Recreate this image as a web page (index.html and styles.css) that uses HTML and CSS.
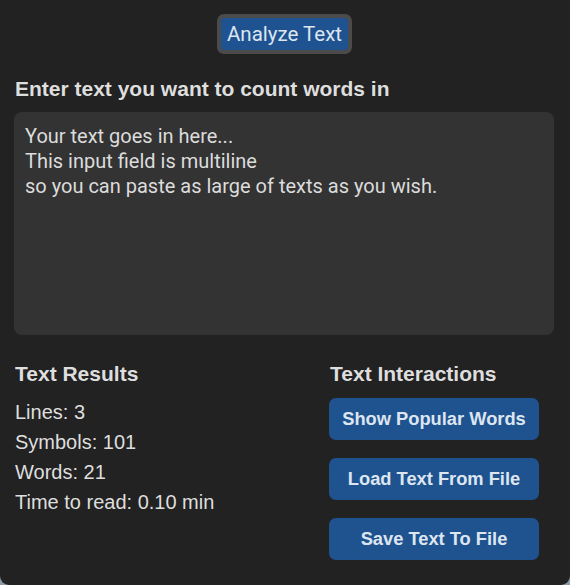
FILE: index.html
```html
<!DOCTYPE html>
<html>
<head>
<meta charset="utf-8">
<link rel="stylesheet" href="styles.css">
</head>
<body>
<div class="app">
  <div class="top">
    <button class="analyze">Analyze Text</button>
  </div>
  <label class="prompt" for="input">Enter text you want to count words in</label>
  <textarea id="input" class="input">Your text goes in here...
This input field is multiline
so you can paste as large of texts as you wish.</textarea>
  <div class="bottom">
    <section class="results">
      <h2 class="heading">Text Results</h2>
      <div class="stat">Lines: 3</div>
      <div class="stat">Symbols: 101</div>
      <div class="stat">Words: 21</div>
      <div class="stat">Time to read: 0.10 min</div>
    </section>
    <section class="actions">
      <h2 class="heading">Text Interactions</h2>
      <button class="action">Show Popular Words</button>
      <button class="action">Load Text From File</button>
      <button class="action">Save Text To File</button>
    </section>
  </div>
</div>
</body>
</html>
```

FILE: styles.css
```css
html, body {
  margin: 0;
  padding: 0;
  background: #8d9aa6;
}
.app {
  width: 570px;
  height: 585px;
  box-sizing: border-box;
  background: #222222;
  border-radius: 0 0 9px 9px;
  padding: 14px 16px 0 14px;
  font-family: "Liberation Sans", Arial, sans-serif;
  color: #dedede;
}
.top {
  display: flex;
  justify-content: center;
  padding-left: 1px;
}
.analyze {
  font-family: Roboto, sans-serif;
  font-size: 20.5px;
  color: #dde6f0;
  background: #1f5290;
  border: 4px solid #4b4b4b;
  border-radius: 7px;
  height: 40px;
  width: 135px;
  padding: 0;
  margin: 0;
}
.prompt {
  display: block;
  margin: 23px 0 0 1px;
  font-weight: bold;
  font-size: 21px;
  line-height: 24px;
}
.input {
  display: block;
  box-sizing: border-box;
  width: 540px;
  height: 223px;
  margin-top: 11px;
  background: #333333;
  border: none;
  border-radius: 8px;
  padding: 12px 11px 10px;
  font-family: Roboto, sans-serif;
  font-size: 20px;
  line-height: 25px;
  color: #dcdcdc;
  resize: none;
  outline: none;
}
.bottom {
  display: flex;
  margin-top: 27px;
}
.results {
  width: 314px;
  padding-left: 1px;
}
.heading {
  margin: 0 0 11px 0;
  font-size: 21px;
  line-height: 24px;
  font-weight: bold;
  color: #dedede;
}
.stat {
  font-size: 20px;
  line-height: 30px;
}
.actions {
  display: flex;
  flex-direction: column;
  align-items: flex-start;
}
.actions .heading {
  margin-bottom: 12px;
  padding-left: 1px;
}
.action {
  width: 210px;
  height: 42px;
  margin: 0 0 18px 0;
  background: #1f5390;
  border: none;
  border-radius: 7px;
  color: #dde6f0;
  font-family: "Liberation Sans", Arial, sans-serif;
  font-weight: bold;
  font-size: 18.3px;
}
```
